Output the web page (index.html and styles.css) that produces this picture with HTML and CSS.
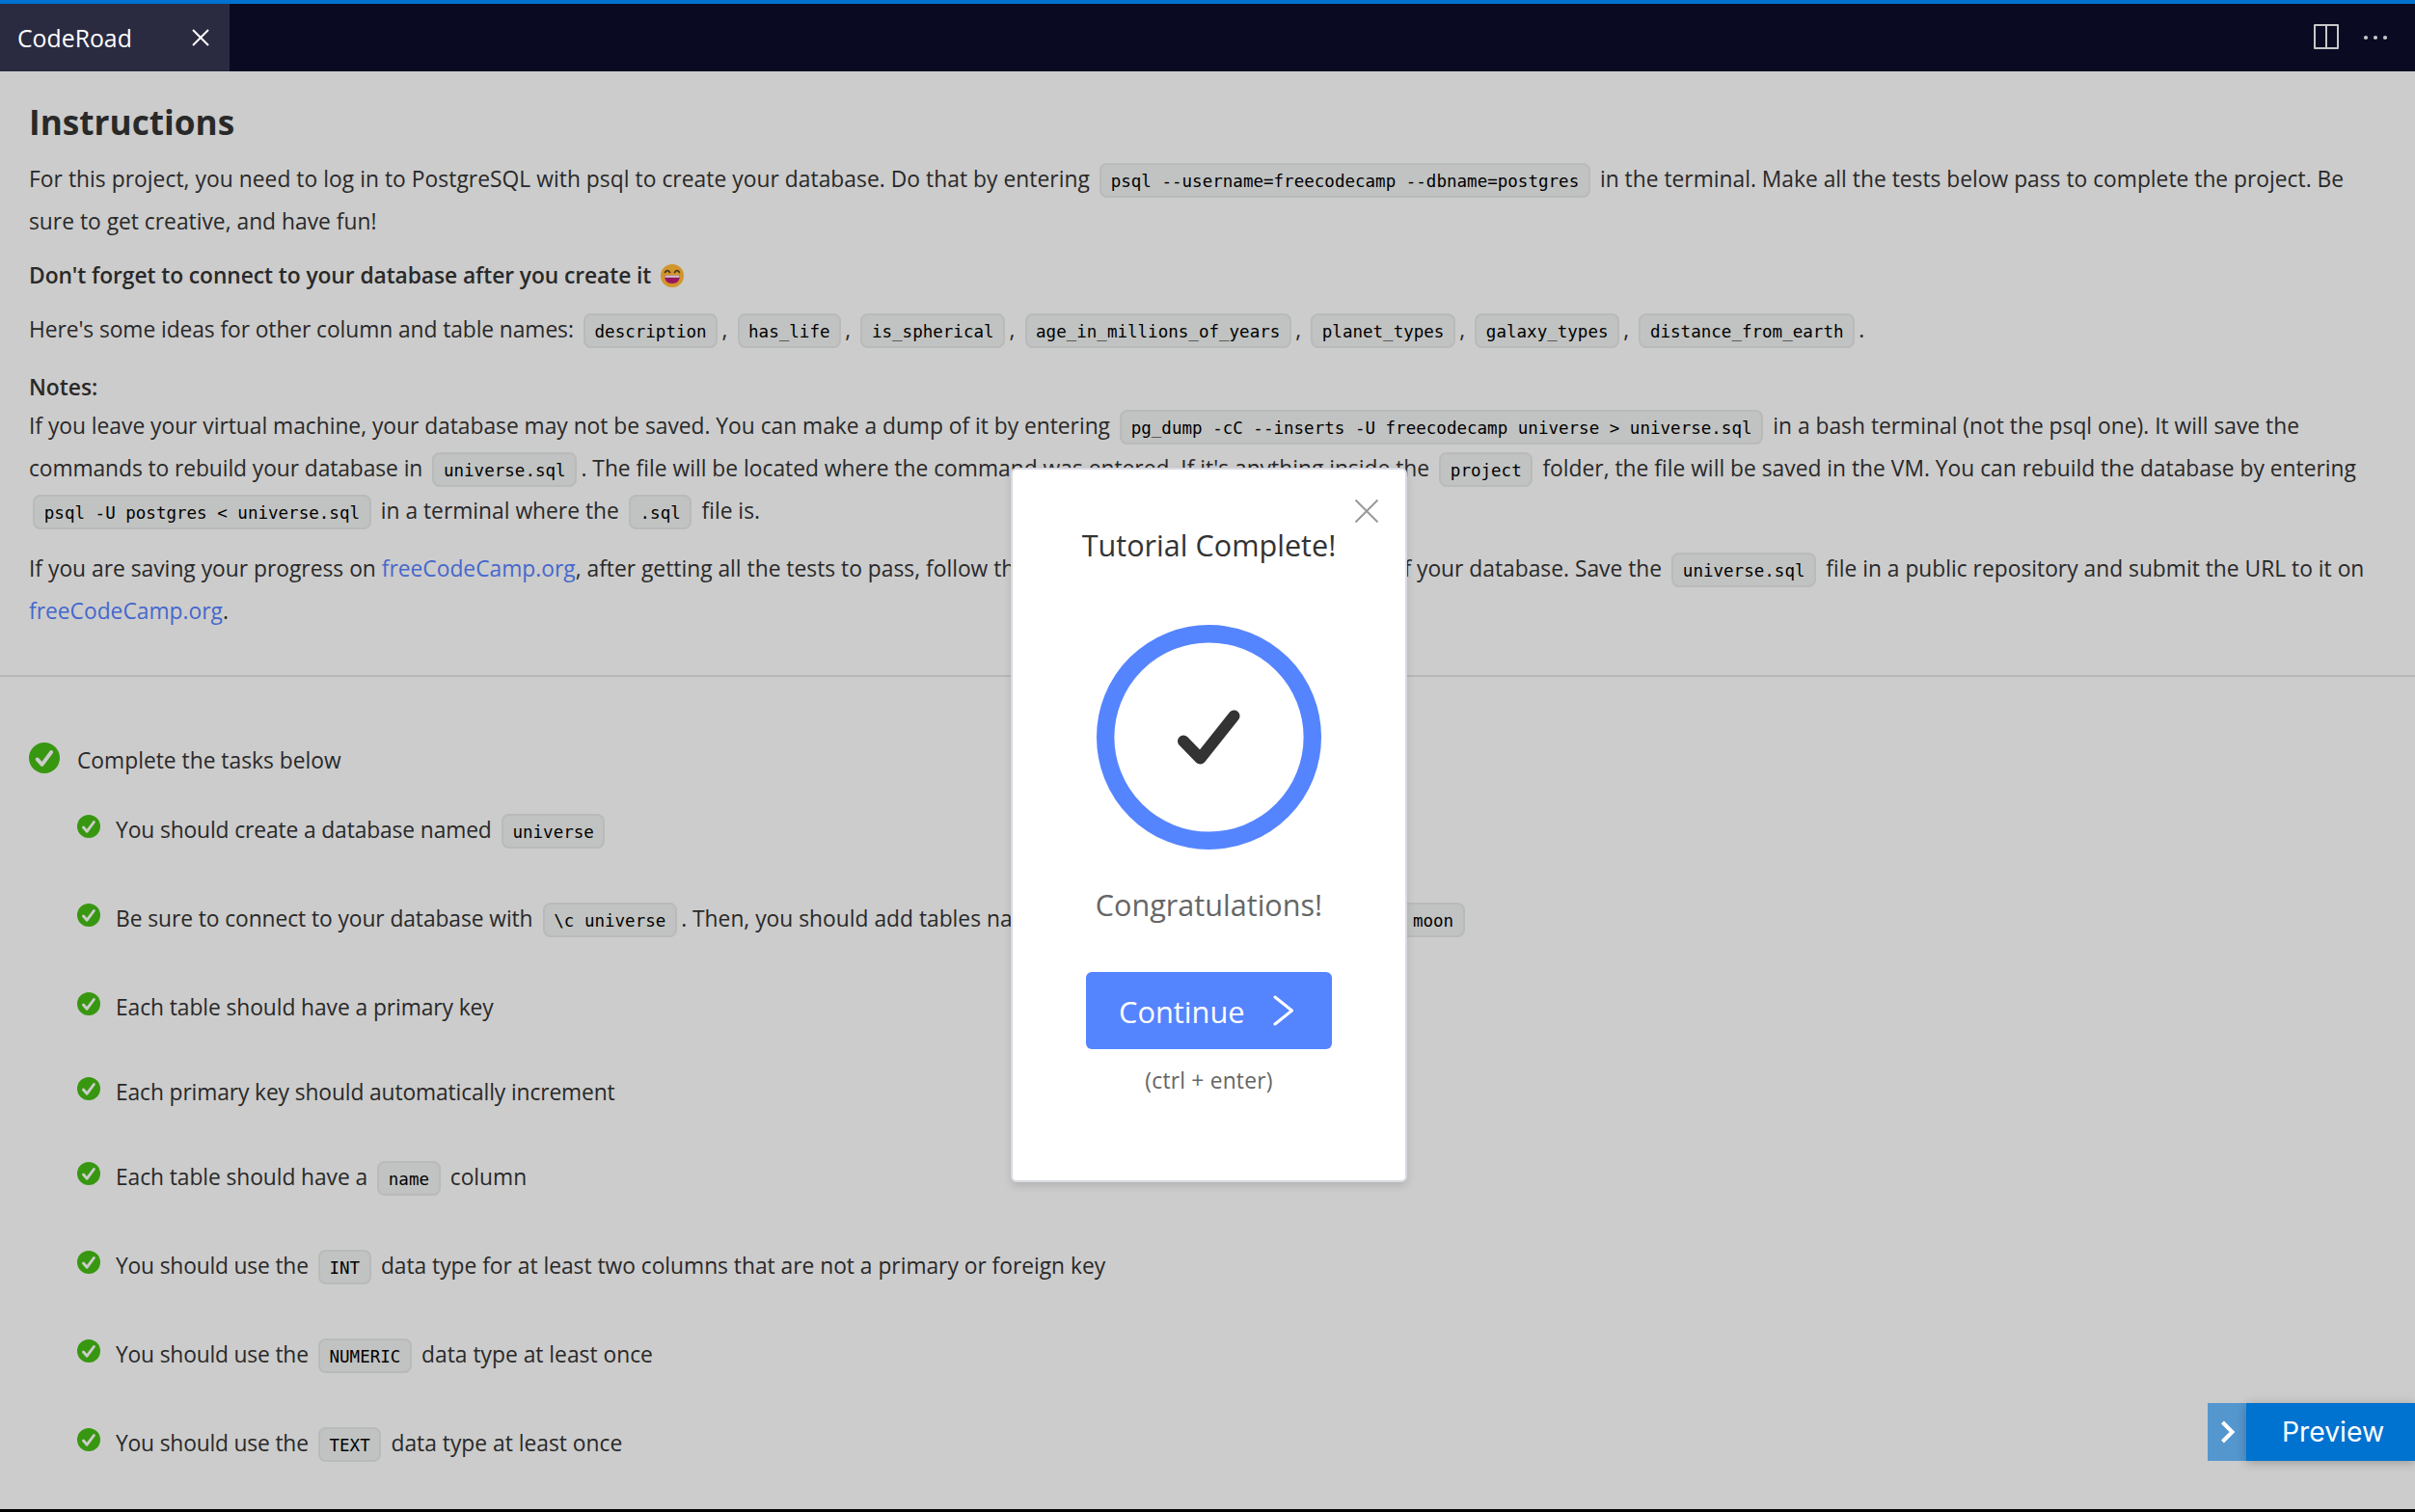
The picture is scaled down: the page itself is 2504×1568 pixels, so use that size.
FILE: index.html
```html
<!DOCTYPE html>
<html lang="en">
<head>
<meta charset="utf-8">
<title>CodeRoad</title>
<link rel="stylesheet" href="styles.css">
</head>
<body>
<svg class="defs" width="0" height="0">
  <symbol id="done" viewBox="0 0 32 32">
    <circle cx="16" cy="16" r="16" fill="#389710"/>
    <path d="M8.6 17.4L13.6 22.9L23.2 10" fill="none" stroke="#ccc" stroke-width="3.8" stroke-linecap="round" stroke-linejoin="round"/>
  </symbol>
</svg>
<div class="app">
  <header class="tabbar">
    <div class="tab">
      <span class="tab-title">CodeRoad</span>
      <svg class="tab-close" width="18" height="18" viewBox="0 0 18 18"><path d="M1 1L17 17M17 1L1 17" stroke="#fff" stroke-width="2"/></svg>
    </div>
    <div class="actions">
      <svg width="26" height="26" viewBox="0 0 26 26"><path d="M1 1H25V25H1ZM13 1V25" fill="none" stroke="#c8c8c8" stroke-width="2" stroke-linejoin="round"/></svg>
      <svg width="26" height="26" viewBox="0 0 26 26" fill="#c8c8c8"><circle cx="3" cy="14" r="2.1"/><circle cx="13" cy="14" r="2.1"/><circle cx="23" cy="14" r="2.1"/></svg>
    </div>
  </header>
  <main class="page">
    <section class="intro">
      <h1>Instructions</h1>
      <p><span class="wide">For this project, you need to log in to PostgreSQL with psql to create your database. Do that by entering</span> <code>psql --username=freecodecamp --dbname=postgres</code> in the terminal. Make all the tests below pass to complete the project. Be<br>sure to get creative, and have fun!</p>
      <p class="strong"><span class="tight">Don't forget to connect to your database after you create it</span> <svg class="emoji" width="24" height="24" viewBox="0 0 24 24"><circle cx="12" cy="12" r="12" fill="#d2952a"/><path d="M4.5 8.5Q7 4.5 9.5 8.5M14.5 8.5Q17 4.5 19.5 8.5" fill="none" stroke="#42301c" stroke-width="1.6" stroke-linecap="round"/><path d="M4 11.5H20Q20 20 12 20Q4 20 4 11.5Z" fill="#97155f"/><path d="M4.4 11.5H19.6V13.8H4.4Z" fill="#d0c4c4"/></svg></p>
      <p class="ideas"><span class="tight">Here's some ideas for other column and table names:</span> <code>description</code>, <code>has_life</code>, <code>is_spherical</code>, <code>age_in_millions_of_years</code>, <code>planet_types</code>, <code>galaxy_types</code>, <code>distance_from_earth</code>.</p>
      <p class="strong notes">Notes:</p>
      <p class="body"><span class="snug">If you leave your virtual machine, your database may not be saved. You can make a dump of it by entering</span> <code>pg_dump -cC --inserts -U freecodecamp universe &gt; universe.sql</code> in a bash terminal (not the psql one). It will save the<br><span class="tight">commands to rebuild your database in</span> <code>universe.sql</code>. The file will be located where the command was entered. If it's anything inside the <code>project</code> folder, the file will be saved in the VM. You can rebuild the database by entering<br><code>psql -U postgres &lt; universe.sql</code> in a terminal where the <code>.sql</code> file is.</p>
      <p>If you are saving your progress on <a>freeCodeCamp.org</a>, after getting all the tests to pass, follow the <span class="covered">instructions above to save a dump</span> of your database. Save the <code>universe.sql</code> file in a public repository and submit the URL to it on<br><a>freeCodeCamp.org</a>.</p>
    </section>
    <section class="tasks">
      <div class="step"><svg width="32" height="32"><use href="#done"/></svg><span>Complete the tasks below</span></div>
      <ul>
        <li class="tall"><svg width="24" height="24"><use href="#done"/></svg><span><span class="tighter">You should create a database named</span> <code>universe</code></span></li>
        <li class="tall"><svg width="24" height="24"><use href="#done"/></svg><span><span class="tight">Be sure to connect to your database with</span> <code>\c universe</code>. Then, you should add tables named <span class="covered"><code>galaxy</code>, <code>star</code>, <code>planet</code>, and</span> <code>moon</code></span></li>
        <li><svg width="24" height="24"><use href="#done"/></svg><span class="tight">Each table should have a primary key</span></li>
        <li><svg width="24" height="24"><use href="#done"/></svg><span class="tighter">Each primary key should automatically increment</span></li>
        <li class="tall"><svg width="24" height="24"><use href="#done"/></svg><span><span class="tight">Each table should have a</span> <code>name</code> column</span></li>
        <li class="tall"><svg width="24" height="24"><use href="#done"/></svg><span><span class="tightest">You should use the</span> <code>INT</code> <span class="snug">data type for at least two columns that are not a primary or foreign key</span></span></li>
        <li class="tall"><svg width="24" height="24"><use href="#done"/></svg><span><span class="tightest">You should use the</span> <code>NUMERIC</code> data type at least once</span></li>
        <li class="tall"><svg width="24" height="24"><use href="#done"/></svg><span><span class="tightest">You should use the</span> <code>TEXT</code> data type at least once</span></li>
      </ul>
    </section>
  </main>
</div>

<div class="modal">
  <svg class="modal-close" width="26" height="26" viewBox="0 0 26 26"><path d="M1.5 1.5L24.5 24.5M24.5 1.5L1.5 24.5" stroke="#999" stroke-width="2"/></svg>
  <h2>Tutorial Complete!</h2>
  <svg class="ring" width="233" height="233" viewBox="0 0 233 233" fill="none"><circle cx="116.5" cy="116.5" r="107.3" stroke="#5584ff" stroke-width="18.4"/><path d="M90 120.5L107.5 138.5L142.5 94.5" stroke="#333" stroke-width="12" stroke-linecap="round" stroke-linejoin="round"/></svg>
  <p class="congrats">Congratulations!</p>
  <button class="continue"><span>Continue</span><svg width="22" height="32" viewBox="0 0 22 32"><path d="M2 2L19.5 16L2 30" fill="none" stroke="#fff" stroke-width="3" stroke-linecap="round" stroke-linejoin="round"/></svg></button>
  <p class="hint">(ctrl + enter)</p>
</div>

<div class="preview">
  <div class="preview-toggle"><svg width="16" height="24" viewBox="0 0 16 24"><path d="M2.5 2L12.5 12L2.5 22" fill="none" stroke="#fff" stroke-width="4"/></svg></div>
  <div class="preview-label">Preview</div>
</div>
</body>
</html>
```
FILE: styles.css
```css
* { box-sizing: border-box; }
body {
  margin: 0;
  background: #000;
  color: #292929;
  font: 22.8px/44px "Open Sans", "Noto Sans", sans-serif;
}
h1, h2, p, ul { margin: 0; padding: 0; }
.defs { display: block; }
.app { display: flex; flex-direction: column; height: 1568px; overflow: hidden; }

.tabbar {
  display: flex;
  justify-content: space-between;
  height: 74px;
  border-top: 4px solid #0072d0;
  background: #0a0a23;
}
.tab {
  display: flex;
  justify-content: space-between;
  width: 238px;
  padding: 15px 21px 0 18px;
  background: #2a2a40;
  color: #fff;
  font-size: 24.8px;
  line-height: 40px;
}
.tab-close { margin-top: 11px; }
.actions { display: flex; gap: 25px; padding: 21px 28px 0 0; }

.page { height: 1491px; background: #ccc; white-space: nowrap; }
.intro { height: 628px; padding: 26px 0 0 30px; border-bottom: 2px solid #b7b7b7; }
h1 { height: 64px; font-size: 35.2px; font-weight: 700; line-height: 53px; }
.intro p + p { margin-top: 12px; }
.strong { font-weight: 600; }
.wide { letter-spacing: .04px; }
.snug { letter-spacing: -.02px; }
.tight { letter-spacing: -.08px; }
.tighter { letter-spacing: -.12px; }
.tightest { letter-spacing: -.18px; }
.covered { visibility: hidden; }
.emoji { vertical-align: -3.5px; margin-left: 4px; }
.intro .notes { margin-top: 16px; height: 40px; }
.intro .body { margin-top: 0; }
.intro .body + p { margin-top: 16px; }
a { color: #4568cc; }
code {
  margin: 0 4.3px;
  padding: 6.5px 9.5px 6px;
  border: 2px solid #b9bbba;
  border-radius: 8px;
  background: #c1c3c2;
  color: #000;
  font: 17.55px/20px "DejaVu Sans Mono", monospace;
  vertical-align: 1px;
}

.tasks { padding: 65px 0 0 30px; }
.step { display: flex; gap: 18px; height: 72px; }
.step svg { margin-top: 3px; }
.tasks ul { padding-left: 50px; list-style: none; }
li { display: flex; gap: 16px; height: 88px; }
li.tall { height: 92px; }
li svg { margin-top: 6px; }

.modal {
  position: absolute;
  left: 1048px;
  top: 485px;
  width: 411px;
  height: 741px;
  display: flex;
  flex-direction: column;
  align-items: center;
  border: 2px solid #d8dae2;
  border-radius: 6px;
  background: #fff;
  box-shadow: 0 4px 8px rgba(0, 0, 0, .12);
}
.modal-close { position: absolute; right: 27px; top: 30px; }
.modal h2 { margin-top: 56px; color: #333; font-size: 30.6px; font-weight: 400; }
.ring { margin-top: 61px; }
.congrats { margin-top: 35px; color: #666; font-size: 30.6px; }
.continue {
  display: flex;
  gap: 29px;
  width: 255px;
  height: 80px;
  margin-top: 48px;
  padding: 19px 0 0 34px;
  border: 0;
  border-radius: 6px;
  background: #5584ff;
  color: #fff;
  font: 30.8px/44px "Open Sans", sans-serif;
}
.continue svg { margin-top: 5px; }
.hint { margin-top: 11px; color: #666; letter-spacing: .2px; }

.preview { position: absolute; right: 0; top: 1455px; display: flex; height: 60px; }
.preview-toggle { display: flex; align-items: center; width: 40px; padding-left: 12.5px; background: #5497ce; }
.preview-label {
  width: 175px;
  padding-left: 37px;
  background: #0072d0;
  box-shadow: 0 2px 10px rgba(0, 0, 0, .25);
  color: #fff;
  font: 28.3px/60px Inter, sans-serif;
}
```
